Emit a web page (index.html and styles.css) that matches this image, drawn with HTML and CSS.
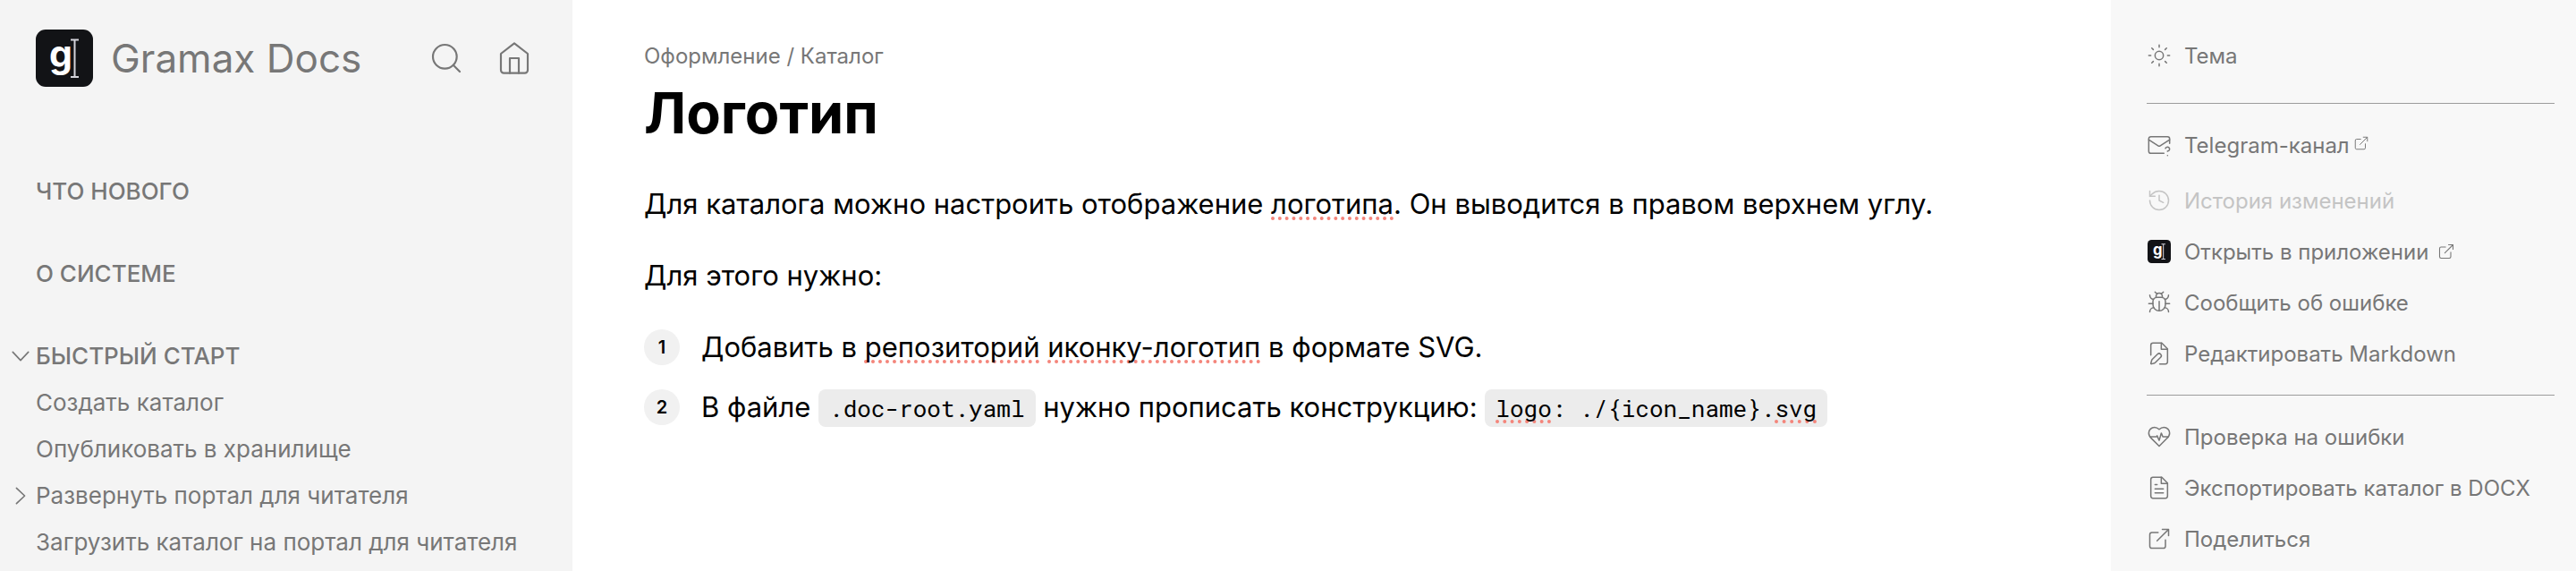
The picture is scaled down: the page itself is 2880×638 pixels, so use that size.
FILE: index.html
```html
<!DOCTYPE html>
<html lang="ru">
<head>
<meta charset="utf-8">
<meta name="viewport" content="width=device-width, initial-scale=1">
<title>Логотип — Gramax Docs</title>
<link rel="stylesheet" href="styles.css">
</head>
<body>
<svg class="sprite" aria-hidden="true">
  <symbol id="i-search" viewBox="0 0 24 24"><circle cx="11" cy="11" r="8"/><path d="m21 21-4.3-4.3"/></symbol>
  <symbol id="i-home" viewBox="0 0 24 24"><path d="m3 9 9-7 9 7v11a2 2 0 0 1-2 2H5a2 2 0 0 1-2-2z"/><path d="M9 22V12h6v10"/></symbol>
  <symbol id="i-down" viewBox="0 0 24 24"><path d="m2.500 7 9.500 10 9.500-10"/></symbol>
  <symbol id="i-right" viewBox="0 0 24 24"><path d="m7 2.500 10 9.500-10 9.500"/></symbol>
  <symbol id="i-sun" viewBox="0 0 24 24"><circle cx="12" cy="12" r="4"/><path d="M12 2v2M12 20v2M4.930 4.930l1.410 1.410M17.660 17.660l1.410 1.410M2 12h2M20 12h2M6.340 17.660l-1.410 1.410M19.070 4.930l-1.410 1.410"/></symbol>
  <symbol id="i-mail" viewBox="0 0 24 24"><path d="M22 10.500V6a2 2 0 0 0-2-2H4a2 2 0 0 0-2 2v12c0 1.100.900 2 2 2h12.500"/><path d="m22 7-8.970 5.700a1.940 1.940 0 0 1-2.060 0L2 7"/><path d="M18 15.280c.200-.400.500-.800.900-1a2.100 2.100 0 0 1 2.600.400c.300.400.500.800.500 1.300 0 1.300-2 2-2 2"/><path d="M20 22v.010"/></symbol>
  <symbol id="i-history" viewBox="0 0 24 24"><path d="M3 12a9 9 0 1 0 9-9 9.750 9.750 0 0 0-6.740 2.740L3 8"/><path d="M3 3v5h5"/><path d="M12 7v5l4 2"/></symbol>
  <symbol id="i-bug" viewBox="0 0 24 24"><path d="m8 2 1.880 1.880M14.120 3.880 16 2M9 7.130v-1a3.003 3.003 0 1 1 6 0v1"/><path d="M12 20c-3.300 0-6-2.700-6-6v-3a4 4 0 0 1 4-4h4a4 4 0 0 1 4 4v3c0 3.300-2.700 6-6 6M12 20v-9"/><path d="M6.530 9C4.600 8.800 3 7.100 3 5M6 13H2M3 21c0-2.100 1.700-3.900 3.800-4M20.970 5c0 2.100-1.600 3.800-3.500 4M22 13h-4M17.200 17c2.100.100 3.800 1.900 3.800 4"/></symbol>
  <symbol id="i-edit" viewBox="0 0 24 24"><path d="M12.500 22H18a2 2 0 0 0 2-2V7.500L14.500 2H6a2 2 0 0 0-2 2v9.500"/><path d="M14 2v6h6"/><path d="M13.378 15.626a1 1 0 1 0-3.004-3.004l-5.010 5.012a2 2 0 0 0-.506.854l-.837 2.870a.5.5 0 0 0 .620.620l2.870-.837a2 2 0 0 0 .854-.506z"/></symbol>
  <symbol id="i-heart" viewBox="0 0 24 24"><path d="M19 14c1.490-1.460 3-3.210 3-5.500A5.500 5.500 0 0 0 16.500 3c-1.760 0-3 .5-4.500 2-1.500-1.500-2.740-2-4.500-2A5.500 5.500 0 0 0 2 8.500c0 2.300 1.500 4.050 3 5.500l7 7Z"/><path d="M3.220 12H9.500l.5-1 2 4.500 2-7 1.500 3.500h5.270"/></symbol>
  <symbol id="i-doc" viewBox="0 0 24 24"><path d="M14.500 2H6a2 2 0 0 0-2 2v16a2 2 0 0 0 2 2h12a2 2 0 0 0 2-2V7.500z"/><path d="M14 2v6h6M16 13H8M16 17H8M10 9H8"/></symbol>
  <symbol id="i-ext" viewBox="0 0 24 24"><path d="M18 13v6a2 2 0 0 1-2 2H5a2 2 0 0 1-2-2V8a2 2 0 0 1 2-2h6"/><path d="M15 3h6v6M10 14 21 3"/></symbol>
</svg>

<div class="layout">
  <aside class="sidebar">
    <header class="brand">
      <a class="brand-link" href="#"><svg class="logo" viewBox="0 0 64 64" aria-hidden="true"><rect width="64" height="64" rx="11" fill="#121316"/><text class="logo-letter" x="15" y="42">g</text><path d="M39 11.500h9M39 53h9M43.500 11.500V53" fill="none" stroke="#d3d3da" stroke-width="2"/></svg><span>Gramax Docs</span></a>
      <button class="tool" type="button" aria-label="Поиск"><svg class="icon icon-lg"><use href="#i-search"/></svg></button>
      <a class="tool" href="#" aria-label="Главная"><svg class="icon icon-lg"><use href="#i-home"/></svg></a>
    </header>
    <nav class="nav" aria-label="Каталог">
      <section class="group"><a class="nav-row nav-title" href="#">ЧТО НОВОГО</a></section>
      <section class="group"><a class="nav-row nav-title" href="#">О СИСТЕМЕ</a></section>
      <section class="group">
        <a class="nav-row nav-title" href="#"><svg class="icon chevron" aria-hidden="true"><use href="#i-down"/></svg>БЫСТРЫЙ СТАРТ</a>
        <a class="nav-row" href="#">Создать каталог</a>
        <a class="nav-row" href="#">Опубликовать в хранилище</a>
        <a class="nav-row" href="#"><svg class="icon chevron" aria-hidden="true"><use href="#i-right"/></svg>Развернуть портал для читателя</a>
        <a class="nav-row" href="#">Загрузить каталог на портал для читателя</a>
      </section>
    </nav>
  </aside>

  <main class="article">
    <nav class="crumbs" aria-label="Путь"><a href="#">Оформление</a> / <a href="#">Каталог</a></nav>
    <h1>Логотип</h1>
    <p>Для каталога можно настроить отображение <span class="typo">логотипа</span>. Он выводится в правом верхнем углу.</p>
    <p>Для этого нужно:</p>
    <ol class="steps">
      <li>Добавить в <span class="typo">репозиторий</span> <span class="typo">иконку-логотип</span> в формате SVG.</li>
      <li>В файле <code>.doc-root.yaml</code> нужно прописать конструкцию: <code><span class="typo">logo</span>: ./{icon_name}.<span class="typo">svg</span></code></li>
    </ol>
  </main>

  <aside class="panel">
    <div class="actions actions-top">
      <button class="action" type="button"><svg class="icon"><use href="#i-sun"/></svg>Тема</button>
    </div>
    <hr>
    <div class="actions">
      <a class="action" href="#"><svg class="icon"><use href="#i-mail"/></svg><span>Telegram-канал</span><svg class="icon ext-sm"><use href="#i-ext"/></svg></a>
      <button class="action history" type="button" disabled><svg class="icon"><use href="#i-history"/></svg>История изменений</button>
      <a class="action" href="#"><svg class="icon app" viewBox="0 0 64 64" aria-hidden="true"><rect width="64" height="64" rx="11" fill="#121316" stroke="none"/><text class="logo-letter" x="15" y="42">g</text><path d="M39 11.500h9M39 53h9M43.500 11.500V53" stroke="#d3d3da" stroke-width="2.500"/></svg><span>Открыть в приложении</span><svg class="icon ext"><use href="#i-ext"/></svg></a>
      <a class="action" href="#"><svg class="icon"><use href="#i-bug"/></svg>Сообщить об ошибке</a>
      <a class="action" href="#"><svg class="icon"><use href="#i-edit"/></svg>Редактировать Markdown</a>
    </div>
    <hr>
    <div class="actions">
      <button class="action" type="button"><svg class="icon"><use href="#i-heart"/></svg>Проверка на ошибки</button>
      <button class="action" type="button"><svg class="icon"><use href="#i-doc"/></svg>Экспортировать каталог в DOCX</button>
      <button class="action" type="button"><svg class="icon"><use href="#i-ext"/></svg>Поделиться</button>
    </div>
  </aside>
</div>
</body>
</html>
```

FILE: styles.css
```css
* { box-sizing: border-box; }

body {
  margin: 0;
  background: #fff;
  color: #000;
  font-family: Inter, "Liberation Sans", sans-serif;
}

a { color: inherit; text-decoration: none; }

button {
  border: 0;
  padding: 0;
  background: none;
  color: inherit;
  font: inherit;
  cursor: pointer;
}

.sprite { position: absolute; width: 0; height: 0; }

.icon {
  flex: none;
  width: 28px;
  height: 28px;
  fill: none;
  stroke: currentColor;
  stroke-width: 1.3;
  stroke-linecap: round;
  stroke-linejoin: round;
}

.logo-letter {
  font: 700 41px Inter, sans-serif;
  fill: #fff;
  stroke: none;
}

.layout {
  display: grid;
  grid-template-columns: 640px minmax(0, 1fr) 520px;
  min-height: 100vh;
}

/* Left sidebar */
.sidebar {
  background: #f4f4f4;
  color: #777;
  padding-top: 33px;
}

.brand {
  display: flex;
  align-items: center;
  gap: 36px;
  padding: 0 45px 0 40px;
  margin-bottom: 91px;
}

.brand-link {
  display: flex;
  align-items: center;
  gap: 20px;
  flex: 1;
  font-size: 44px;
  line-height: 64px;
  white-space: nowrap;
}

.logo { width: 64px; height: 64px; }
.tool { display: flex; }
.icon-lg { width: 40px; height: 40px; }

.nav { display: grid; gap: 40px; }

.nav-row {
  display: flex;
  align-items: center;
  padding-left: 40px;
  font-size: 26px;
  line-height: 52px;
}

.nav-title { font-weight: 500; }

.chevron {
  width: 22px;
  height: 22px;
  margin-left: -28px;
  margin-right: 6px;
  stroke-width: 1.8;
}

/* Article */
.article { padding: 45px 80px; }

.crumbs {
  color: #777;
  font-size: 24px;
  line-height: 36px;
}

h1 {
  margin: 9px 0 42px;
  font-size: 63px;
  font-weight: 700;
  line-height: 72px;
}

.article p {
  margin: 0 0 32px;
  font-size: 31px;
  line-height: 48px;
}

.steps {
  display: grid;
  gap: 19px;
  margin: 0;
  padding: 0;
  list-style: none;
  counter-reset: step;
  font-size: 31px;
  line-height: 48px;
}

.steps li {
  position: relative;
  padding-left: 64px;
  counter-increment: step;
}

.steps li::before {
  content: counter(step);
  position: absolute;
  top: 4px;
  left: 0;
  width: 40px;
  border-radius: 50%;
  background: #f1f1f1;
  font-size: 20px;
  font-weight: 600;
  line-height: 40px;
  text-align: center;
}

code {
  padding: 4px 12px;
  border-radius: 8px;
  background: #ececec;
  font-family: "Roboto Mono", "DejaVu Sans Mono", monospace;
  font-size: 26px;
}

.typo {
  text-decoration: underline dotted #f4857b 4px;
  text-underline-offset: 3px;
  text-decoration-skip-ink: none;
}

/* Right panel */
.panel {
  padding: 34px 24px 0 40px;
  background: #f8f8f8;
  color: #777;
}

.panel hr {
  height: 1px;
  margin: 18px 0;
  border: 0;
  background: #9c9c9c;
}

.actions {
  display: flex;
  flex-direction: column;
  gap: 1px;
}

.actions-top { padding-bottom: 7px; }

.action {
  display: flex;
  align-items: center;
  gap: 14px;
  min-height: 56px;
  font-size: 24px;
  text-align: left;
}

.history {
  margin-top: 5px;
  color: #c4c4c4;
}

.app { padding: 1px; }

.ext-sm {
  width: 18px;
  height: 18px;
  margin-left: -10px;
  margin-bottom: 4px;
}

.ext {
  width: 20px;
  height: 20px;
  margin-left: -4px;
}
```
